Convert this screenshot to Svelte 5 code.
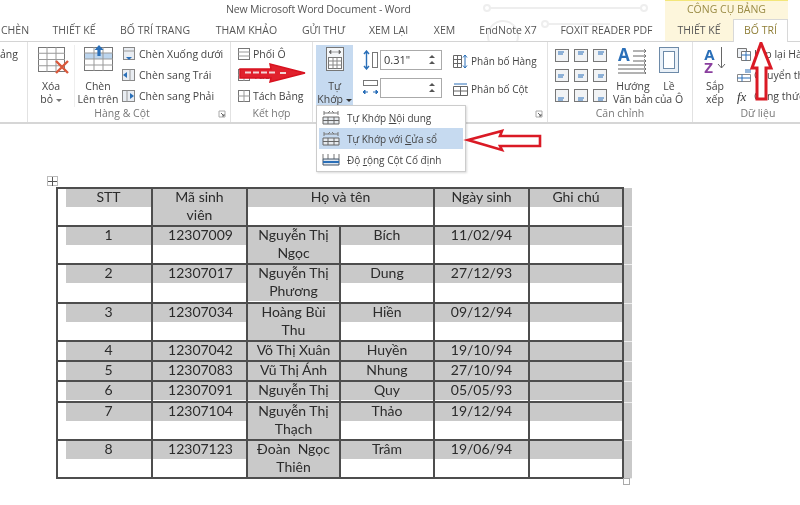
<script>
  const tabs = [
    { label: 'CHÈN', w: 50, ml: -10 },
    { label: 'THIẾT KẾ', w: 68 },
    { label: 'BỐ TRÍ TRANG', w: 94 },
    { label: 'THAM KHẢO', w: 89 },
    { label: 'GỬI THƯ', w: 65 },
    { label: 'XEM LẠI', w: 65 },
    { label: 'XEM', w: 47 },
    { label: 'EndNote X7', w: 80 },
    { label: 'FOXIT READER PDF', w: 117 },
    { label: 'THIẾT KẾ', w: 68, ctx: true },
    { label: 'BỐ TRÍ', w: 55, active: true }
  ];

  const rows = [
    { no: '1', id: '12307009', name: ['Nguyễn Thị', 'Ngọc'], last: 'Bích', date: '11/02/94', h: 38 },
    { no: '2', id: '12307017', name: ['Nguyễn Thị', 'Phương'], last: 'Dung', date: '27/12/93', h: 39 },
    { no: '3', id: '12307034', name: ['Hoàng Bùi', 'Thu'], last: 'Hiền', date: '09/12/94', h: 38 },
    { no: '4', id: '12307042', name: ['Võ Thị Xuân'], last: 'Huyền', date: '19/10/94', h: 20 },
    { no: '5', id: '12307083', name: ['Vũ Thị Ánh'], last: 'Nhung', date: '27/10/94', h: 19 },
    { no: '6', id: '12307091', name: ['Nguyễn Thị'], last: 'Quy', date: '05/05/93', h: 21 },
    { no: '7', id: '12307104', name: ['Nguyễn Thị', 'Thạch'], last: 'Thảo', date: '19/12/94', h: 38, thick: true },
    { no: '8', id: '12307123', name: ['Đoàn  Ngọc', 'Thiên'], last: 'Trâm', date: '19/06/94', h: 38, thick: true }
  ];

  const alignRows = [0, 1, 2];
</script>

{#snippet launcher()}
  <svg class="launcher" width="8" height="8" viewBox="0 0 8 8"><path d="M1 1h6v6H1z" fill="none" stroke="#aaa"/><path d="M3 3l3 3M6 4v2H4" fill="none" stroke="#666"/></svg>
{/snippet}

{#snippet gridIcon(w, h, cols, rws)}
  <svg width={w} height={h} viewBox="0 0 {w} {h}">
    <rect x=".5" y=".5" width={w - 1} height={h - 1} fill="#fff" stroke="#777"/>
    {#each Array(cols - 1) as _, i}
      <path d="M{((i + 1) * w) / cols} 0V{h}" stroke="#999"/>
    {/each}
    {#each Array(rws - 1) as _, i}
      <path d="M0 {((i + 1) * h) / rws}H{w}" stroke="#999"/>
    {/each}
  </svg>
{/snippet}

{#snippet cell(lines, two, fill = false, pad = false)}
  <div class="ln shade" class:pad>{lines[0]}</div>
  {#if two}
    <div class="ln" class:shade={fill}>{lines[1] ?? ''}</div>
  {/if}
{/snippet}

<div class="page">
  <svg class="decor" width="800" height="41" viewBox="0 0 800 41" aria-hidden="true">
    <g fill="none" stroke="#eeeeee" stroke-width="2">
      <path d="M489 8H641"/>
      <circle cx="487" cy="8" r="3"/>
      <circle cx="644" cy="8" r="3"/>
      <circle cx="545" cy="24" r="3"/>
      <circle cx="503" cy="36" r="15"/>
      <path d="M548 24H610"/>
    </g>
  </svg>

  <header class="titlebar">
    <span class="doc">New Microsoft Word Document - Word</span>
    <span class="ctx-head">CÔNG CỤ BẢNG</span>
  </header>

  <nav class="tabs">
    {#each tabs as t}
      <span class="tab" class:ctx={t.ctx} class:active={t.active} style="width:{t.w}px;margin-left:{t.ml ?? 0}px">{t.label}</span>
    {/each}
  </nav>

  <section class="ribbon">
    <div class="group" style="width:28px">
      <div class="cut">ảng</div>
    </div>

    <div class="group" style="width:203px">
      <div class="body">
        <div class="big" style="width:46px">
          <div class="ico xoa">
            {@render gridIcon(27, 25, 3, 4)}
            <svg class="cross" width="16" height="16" viewBox="0 0 16 16"><path d="M2 2l12 12M14 2L2 14" stroke="#d9583b" stroke-width="2.4"/></svg>
          </div>
          <span>Xóa</span>
          <span>bỏ <i class="caret"></i></span>
        </div>
        <div class="big sep-left" style="width:46px">
          <div class="ico chen">
            <svg width="29" height="24" viewBox="0 0 29 24">
              <rect x=".5" y=".5" width="28" height="23" fill="#fff" stroke="#777"/>
              <rect x="1" y="6" width="27" height="6" fill="#bcd5ee"/>
              <path d="M10 0v24M19 0v24M0 6h29M0 12h29M0 18h29" stroke="#999"/>
            </svg>
            <svg class="up" width="10" height="12" viewBox="0 0 10 12"><path d="M5 0l4.5 5H6.6v6H3.4V5H.5z" fill="#2a6fb8"/></svg>
          </div>
          <span>Chèn</span>
          <span>Lên trên</span>
        </div>
        <div class="list rows-left">
          <div class="item">
            <svg width="14" height="14" viewBox="0 0 14 14"><rect x="1.5" y=".5" width="11" height="12" fill="#e9edf2" stroke="#888"/><path d="M1.5 4h11" stroke="#999"/><path d="M7 13l-3-3h6z" fill="#2a6fb8"/></svg>
            Chèn Xuống dưới
          </div>
          <div class="item">
            <svg width="14" height="14" viewBox="0 0 14 14"><rect x=".5" y="1.5" width="12" height="11" fill="#e9edf2" stroke="#888"/><path d="M8 1.5v11" stroke="#999"/><path d="M1 7l4-3v6z" fill="#2a6fb8"/></svg>
            Chèn sang Trái
          </div>
          <div class="item">
            <svg width="14" height="14" viewBox="0 0 14 14"><rect x=".5" y="1.5" width="12" height="11" fill="#e9edf2" stroke="#888"/><path d="M5 1.5v11" stroke="#999"/><path d="M12 7L8 4v6z" fill="#2a6fb8"/></svg>
            Chèn sang Phải
          </div>
        </div>
      </div>
      <div class="label off-launch">Hàng &amp; Cột{@render launcher()}</div>
    </div>

    <div class="group" style="width:82px">
      <div class="body">
        <div class="list merge">
          <div class="item">{@render gridIcon(12, 12, 1, 3)} Phối Ô</div>
          <div class="item">{@render gridIcon(12, 12, 2, 2)} Tách Ô</div>
          <div class="item">{@render gridIcon(12, 12, 2, 2)} Tách Bảng</div>
        </div>
      </div>
      <div class="label">Kết hợp</div>
    </div>

    <div class="group" style="width:235px">
      <div class="body">
        <div class="big fit">
          <div class="ico">
            <svg width="18" height="24" viewBox="0 0 18 24">
              <rect x=".5" y=".5" width="17" height="23" fill="#f4f6f8" stroke="#777"/>
              <path d="M3 5l2-2v4zM15 5l-2-2v4zM5 5h8" fill="#666" stroke="#666" stroke-width=".6"/>
              <rect x="2.5" y="10.500" width="13" height="11" fill="#fff" stroke="#777"/>
              <path d="M2.5 14h13M2.5 18h13M7 10.500v11M11 10.500v11" stroke="#888"/>
            </svg>
          </div>
          <span>Tự</span>
          <span>Khớp <i class="caret dark"></i></span>
        </div>
        <div class="sizes">
          <div class="size">
            <svg width="15" height="20" viewBox="0 0 15 20"><path d="M3.500 1v18M1 4l2.500-3L6 4M1 16l2.500 3L6 16" fill="none" stroke="#2a6fb8" stroke-width="1.400"/><rect x="9.500" y="2.500" width="5" height="15" fill="#fff" stroke="#777"/></svg>
            <div class="spin">0.31"<span class="arrows"></span></div>
          </div>
          <div class="size">
            <svg width="15" height="20" viewBox="0 0 15 20"><rect x=".5" y="2.5" width="14" height="5" fill="#fff" stroke="#777"/><path d="M0 14h5M10 14h5M0 14l2-2v4zM15 14l-2-2v4z" fill="#2a6fb8" stroke="#2a6fb8"/></svg>
            <div class="spin"><span class="arrows"></span></div>
          </div>
        </div>
        <div class="list spread">
          <div class="item">
            <svg width="15" height="13" viewBox="0 0 15 13"><path d="M.5.5h8v12h-8zM.5 4.500h8M.5 8.500h8M4.500.5v12" fill="none" stroke="#666"/><path d="M12 0v13M10 2.500L12 0l2 2.500M10 10.500L12 13l2-2.500" fill="none" stroke="#2a6fb8"/></svg>
            Phân bố Hàng
          </div>
          <div class="item">
            <svg width="15" height="13" viewBox="0 0 15 13"><path d="M.5 3.500h14v9H.5zM.5 8h14M7.500 3.500v9" fill="none" stroke="#666"/><path d="M1 1h13" stroke="#2a6fb8"/></svg>
            Phân bố Cột
          </div>
        </div>
      </div>
      <div class="label launch-only">{@render launcher()}</div>
    </div>

    <div class="group" style="width:145px">
      <div class="body">
        <div class="aligns">
          {#each alignRows as r}
            {#each alignRows as c}
              <svg width="14" height="13" viewBox="0 0 14 13">
                <rect x=".5" y=".5" width="13" height="12" fill="#f1f3f5" stroke="#777"/>
                <path d="M{3 + c} {3 + r * 3}h{6}M{3 + c} {5 + r * 3}h{5}" stroke="#2a6fb8"/>
              </svg>
            {/each}
          {/each}
        </div>
        <div class="big" style="width:40px">
          <div class="ico">
            <svg width="30" height="27" viewBox="0 0 30 27">
              <text x="0" y="14" font-size="17" font-weight="700" font-family="Open Sans" fill="#2a6fb8">A</text>
              <path d="M15 4h13M15 9h13M15 14h13M0 18h28M0 22h28M0 26h28" stroke="#666"/>
              <path d="M26 2l2 2-2 2M26 7l2 2-2 2M26 12l2 2-2 2M26 16l2 2-2 2M26 20l2 2-2 2M26 24l2 2-2 2" fill="none" stroke="#555" stroke-width=".7"/>
            </svg>
          </div>
          <span>Hướng</span>
          <span>Văn bản</span>
        </div>
        <div class="big" style="width:32px">
          <div class="ico">
            <svg width="20" height="26" viewBox="0 0 20 26">
              <rect x=".5" y=".5" width="19" height="25" fill="#eaf1f8" stroke="#6d8aa8"/>
              <rect x="4.500" y="4.500" width="11" height="17" fill="#fff" stroke="#6d8aa8"/>
            </svg>
          </div>
          <span>Lề</span>
          <span>của Ô</span>
        </div>
      </div>
      <div class="label">Căn chỉnh</div>
    </div>

    <div class="group last">
      <div class="body">
        <div class="big sorter">
          <div class="ico sort">
            <span class="az"><b class="a">A</b><b class="z">Z</b></span>
            <svg width="9" height="22" viewBox="0 0 9 22"><path d="M4.500 0v21M1 17l3.500 4L8 17" fill="none" stroke="#666"/></svg>
          </div>
          <span>Sắp</span>
          <span>xếp</span>
        </div>
        <div class="list data">
          <div class="item">
            <svg width="14" height="13" viewBox="0 0 14 13"><path d="M.5.5h9v9h-9z" fill="#eef2f6" stroke="#777"/><path d="M4.500 3.500h9v9h-9z" fill="#fff" stroke="#777"/><path d="M4.500 7h9M9 3.500v9" stroke="#2a6fb8"/></svg>
            Lặp lại Hàng
          </div>
          <div class="item">
            <svg width="14" height="13" viewBox="0 0 14 13"><path d="M.5 5.500h13v7H.5z" fill="#fff" stroke="#888"/><path d="M.5 9h13M5 5.500v7M8 3h6M8 1h6" stroke="#2a6fb8"/></svg>
            Chuyển thành
          </div>
          <div class="item"><i class="fx">fx</i> Công thức</div>
        </div>
      </div>
      <div class="label">Dữ liệu</div>
    </div>
  </section>

  <main class="doc-area">
    <div class="sheet">
      <span class="handle">
        <svg width="9" height="9" viewBox="0 0 9 9"><path d="M4.500 0v9M0 4.500h9" stroke="#555"/></svg>
      </span>
      <table>
        <colgroup>
          <col style="width:95px" />
          <col style="width:95px" />
          <col style="width:93px" />
          <col style="width:94px" />
          <col style="width:95px" />
          <col style="width:94px" />
          <col style="width:9px" />
        </colgroup>
        <tbody>
          <tr style="height:38px">
            <td>{@render cell(['STT'], true, false, true)}</td>
            <td>{@render cell(['Mã sinh', 'viên'], true, true)}</td>
            <td colspan="2">{@render cell(['Họ và tên'], true)}</td>
            <td>{@render cell(['Ngày sinh'], true)}</td>
            <td>{@render cell(['Ghi chú'], true)}</td>
            <td class="stripe"></td>
          </tr>
          {#each rows as r}
            <tr class:thick={r.thick} style="height:{r.h}px">
              <td>{@render cell([r.no], r.h > 30, false, true)}</td>
              <td class="nudge">{@render cell([r.id], r.h > 30)}</td>
              <td>{@render cell(r.name, r.h > 30, true)}</td>
              <td>{@render cell([r.last], r.h > 30)}</td>
              <td>{@render cell([r.date], r.h > 30)}</td>
              <td>{@render cell([''], r.h > 30)}</td>
              <td class="stripe"></td>
            </tr>
          {/each}
        </tbody>
      </table>
      <span class="resize"></span>
    </div>
  </main>

  <div class="menu">
    <div class="mi">
      <svg width="18" height="15" viewBox="0 0 18 15"><path d="M2 3h14M2 1v4M16 1v4M6 3l2-2M12 3l-2-2" fill="none" stroke="#777"/><path d="M1 7h16v7H1z" fill="#e6eaee" stroke="#666"/><path d="M1 10.500h16M6 7v7M12 7v7" stroke="#666"/></svg>
      <span>Tự Khớp <u>N</u>ội dung</span>
    </div>
    <div class="mi on">
      <svg width="18" height="15" viewBox="0 0 18 15"><path d="M2 3h14M2 1v4M16 1v4M6 3l2-2M12 3l-2-2" fill="none" stroke="#777"/><path d="M1 7h16v7H1z" fill="#e6eaee" stroke="#666"/><path d="M1 10.500h16M6 7v7M12 7v7" stroke="#666"/></svg>
      <span>Tự Khớp với <u>C</u>ửa sổ</span>
    </div>
    <div class="mi">
      <svg width="18" height="15" viewBox="0 0 18 15"><path d="M1 2v5M17 2v5M6 2v5M12 2v5" stroke="#777"/><path d="M1 7h16v6H1z" fill="#dfe6ee" stroke="#456"/><path d="M1 10h16" stroke="#2a6fb8" stroke-width="2"/></svg>
      <span>Độ <u>r</u>ộng Cột Cố định</span>
    </div>
  </div>

  <svg class="arrows-layer" width="800" height="505" viewBox="0 0 800 505" aria-hidden="true">
    <path d="M240 69H271L270 64L305 73L270 82L271 78H240Z" fill="#e0212c" stroke="#d8121f" stroke-width="1.500"/>
    <path d="M245 72.500h30M280 73h6" stroke="#f3d6d6" stroke-width="2" stroke-dasharray="6 2"/>
    <path d="M468 140L502 131L500 136H540V146H500L502 150Z" fill="#fff" stroke="#da1a25" stroke-width="2.600"/>
    <path d="M761 43L771 68H766V99H757V68H752Z" fill="#fff" stroke="#da1a25" stroke-width="3"/>
  </svg>
</div>

<style>
  :global(body) {
    margin: 0;
    background: #fff;
  }

  .page {
    position: relative;
    width: 800px;
    height: 505px;
    overflow: hidden;
    background: #fff;
    color: #444;
    font-family: "Open Sans", sans-serif;
    font-size: 10.5px;
    filter: blur(0.5px);
  }

  .decor {
    position: absolute;
    top: 0;
    left: 0;
  }

  .titlebar {
    position: relative;
    display: flex;
    align-items: flex-start;
    height: 19px;
    padding-left: 226px;
  }

  .doc {
    padding-top: 1px;
    line-height: 16px;
    letter-spacing: -0.15px;
    color: #555;
  }

  .ctx-head {
    width: 123px;
    height: 18px;
    margin-left: auto;
    margin-right: 12px;
    border-top: 1px solid #f3e67a;
    background: #fdf6dc;
    color: #9a8b45;
    line-height: 17px;
    text-align: center;
  }

  .tabs {
    position: relative;
    display: flex;
    height: 22px;
    white-space: nowrap;
  }

  .tab {
    flex: none;
    line-height: 22px;
    text-align: center;
    color: #555;
  }

  .tab.ctx {
    background: #fdf6dc;
  }

  .tab.active {
    box-sizing: border-box;
    height: 23px;
    border: 1px solid #d8d8d8;
    border-bottom: 0;
    background: #fff;
    color: #8f7e36;
    line-height: 21px;
    z-index: 1;
  }

  .ribbon {
    position: relative;
    display: flex;
    height: 80px;
    border-top: 1px solid #d4d4d4;
    border-bottom: 2px solid #d6d6d6;
    line-height: 13px;
  }

  .group {
    position: relative;
    flex: none;
    box-sizing: border-box;
    display: flex;
    flex-direction: column;
    border-right: 1px solid #e2e2e2;
  }

  .group.last {
    flex: 1;
    border-right: 0;
  }

  .cut {
    margin: 5px 0 0 0;
    line-height: 14px;
  }

  .body {
    flex: 1;
    display: flex;
    padding-top: 3px;
    min-height: 0;
  }

  .label {
    position: relative;
    height: 15px;
    line-height: 13px;
    text-align: center;
    color: #777;
  }

  .off-launch {
    padding-right: 14px;
  }

  .launcher {
    position: absolute;
    right: 4px;
    top: 3px;
  }

  .big {
    flex: none;
    display: flex;
    flex-direction: column;
    align-items: center;
  }

  .big span {
    white-space: nowrap;
  }

  .ico {
    position: relative;
    display: flex;
    align-items: flex-start;
    height: 35px;
    padding-top: 2px;
    box-sizing: border-box;
  }

  .xoa .cross {
    position: absolute;
    right: -5px;
    top: 14px;
  }

  .chen .up {
    position: absolute;
    left: 10px;
    top: 0;
  }

  .sep-left {
    border-left: 1px solid #eee;
  }

  .caret {
    display: inline-block;
    border: 3px solid transparent;
    border-top-color: #777;
    border-bottom: 0;
    vertical-align: middle;
  }

  .caret.dark {
    border-top-color: #333;
  }

  .list {
    display: flex;
    flex-direction: column;
    gap: 7px;
    margin-top: 2px;
    margin-left: 4px;
    white-space: nowrap;
  }

  .item {
    display: flex;
    align-items: center;
    gap: 3px;
    height: 14px;
  }

  .rows-left {
    margin-left: 1px;
  }

  .merge {
    margin-left: 7px;
  }

  .fit {
    width: 37px;
    height: 62px;
    margin: 0 0 0 3px;
    background: #c6daf0;
    color: #444;
  }

  .sizes {
    display: flex;
    flex-direction: column;
    gap: 8px;
    margin: 5px 0 0 10px;
  }

  .size {
    display: flex;
    align-items: center;
    gap: 2px;
  }

  .spin {
    position: relative;
    box-sizing: border-box;
    width: 62px;
    height: 20px;
    padding-left: 3px;
    border: 1px solid #aaa;
    background: #fff;
    line-height: 18px;
    color: #333;
    font-size: 11px;
  }

  .arrows {
    position: absolute;
    right: 6px;
    top: 4px;
    width: 0;
    height: 0;
    border: 3px solid transparent;
    border-bottom-color: #555;
    border-top: 0;
    filter: drop-shadow(0 6px 0 #555);
  }

  .spread {
    gap: 14px;
    margin: 9px 0 0 11px;
    font-size: 10px;
  }

  .aligns {
    display: grid;
    grid-template-columns: repeat(3, 14px);
    gap: 7px 5px;
    margin: 4px 6px 0 7px;
    align-content: start;
  }

  .aligns svg {
    display: block;
  }

  .sort {
    gap: 2px;
  }

  .sorter {
    width: 36px;
    margin-left: 4px;
  }

  .az {
    display: flex;
    flex-direction: column;
    font-family: "Open Sans", sans-serif;
    font-size: 15px;
    line-height: 13px;
    margin-top: 1px;
  }

  .a {
    color: #2a6fb8;
  }

  .z {
    color: #8a3f9e;
  }

  .data {
    margin-left: 4px;
  }

  .fx {
    width: 14px;
    font-family: "Liberation Serif", serif;
    font-size: 13px;
    color: #333;
  }

  .doc-area {
    padding: 63px 0 0 56px;
  }

  .sheet {
    position: relative;
    width: 575px;
  }

  .handle {
    position: absolute;
    left: -9px;
    top: -11px;
    box-sizing: border-box;
    display: flex;
    align-items: center;
    justify-content: center;
    width: 11px;
    height: 10px;
    border: 1px solid #bbb;
    background: #fff;
  }

  .resize {
    position: absolute;
    left: 567px;
    top: 291px;
    width: 5px;
    height: 5px;
    border: 1px solid #aaa;
    background: #fff;
  }

  table {
    table-layout: fixed;
    width: 575px;
    border-collapse: collapse;
    font-family: Lato, sans-serif;
    font-size: 14px;
    color: #2b2b2b;
  }

  td {
    padding: 0;
    border: 2px solid #4d4d4d;
    vertical-align: top;
    text-align: center;
  }

  .thick td {
    border-top-color: #222;
  }

  td.nudge {
    padding-left: 2px;
  }

  td.nudge .ln {
    margin-left: -2px;
    padding-left: 2px;
  }

  td.stripe {
    border-width: 0 0 1px 2px;
    border-bottom-color: #eee;
    background: #c9c9c9;
  }

  .ln {
    height: 18px;
    line-height: 16px;
    white-space: pre;
  }

  .shade {
    background: #c9c9c9;
  }

  .pad {
    margin-left: 8px;
  }

  .menu {
    position: absolute;
    left: 316px;
    top: 105px;
    box-sizing: border-box;
    width: 150px;
    height: 67px;
    padding: 1px 2px;
    border: 1px solid #ccc;
    background: #fff;
    box-shadow: 1px 1px 2px rgba(0, 0, 0, 0.15);
    font-size: 10px;
  }

  .mi {
    display: flex;
    align-items: center;
    gap: 7px;
    height: 21px;
    padding-left: 3px;
  }

  .mi.on {
    background: #c6daf0;
  }

  .arrows-layer {
    position: absolute;
    top: 0;
    left: 0;
    pointer-events: none;
  }
</style>
